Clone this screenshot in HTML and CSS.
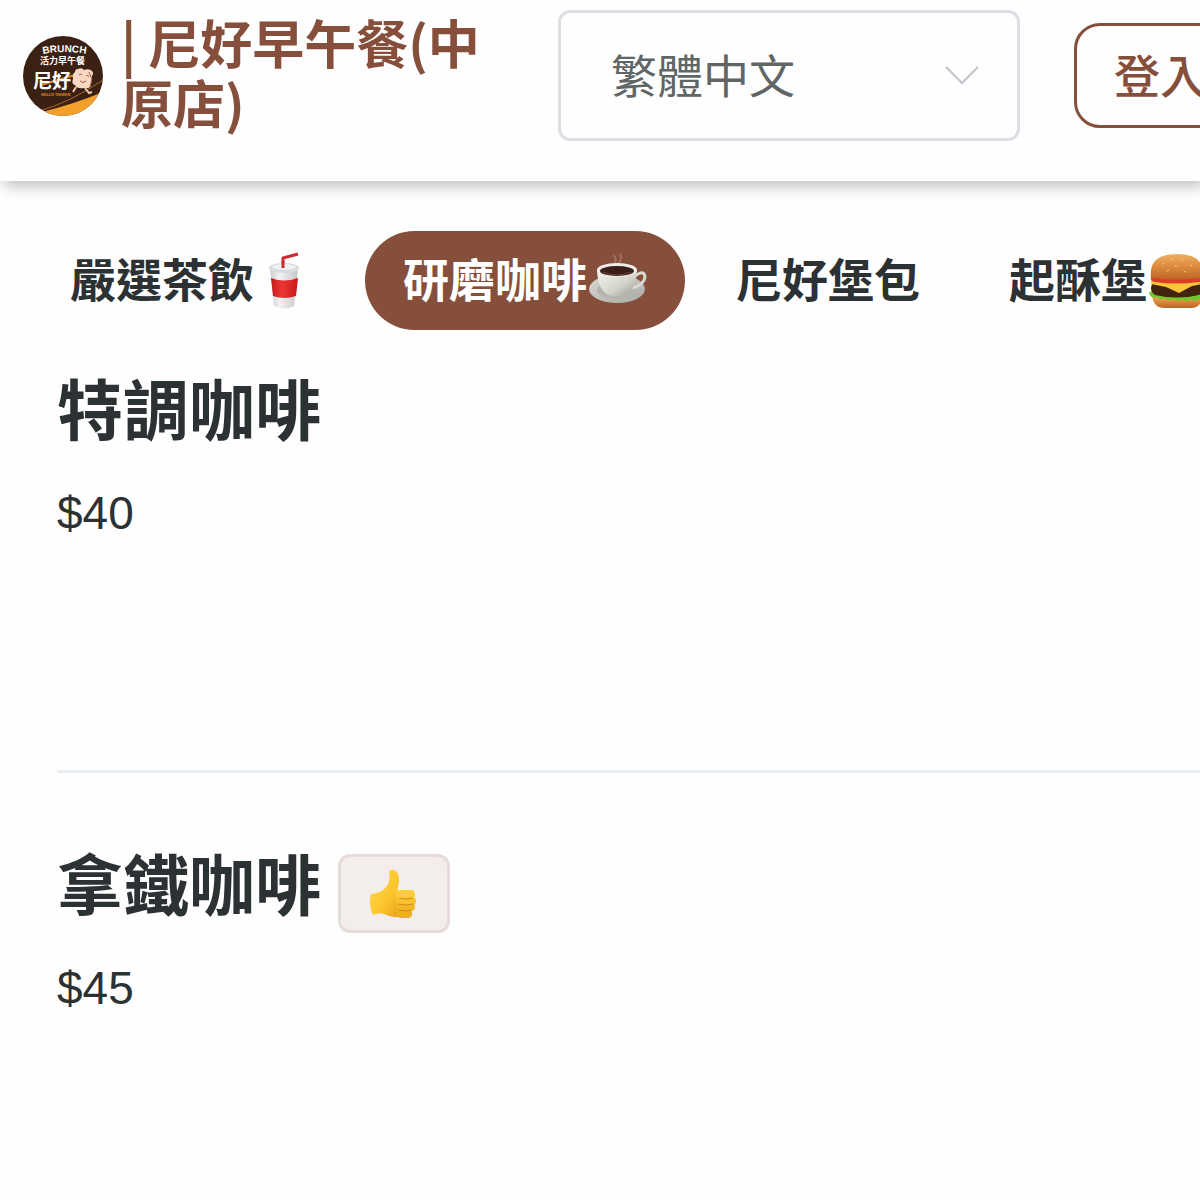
FILE: index.html
```html
<!DOCTYPE html>
<html lang="zh-Hant">
<head>
  <meta charset="UTF-8">
  <meta name="viewport" content="width=device-width, initial-scale=1.0">
  <title>尼好早午餐(中原店)</title>
  <link rel="stylesheet" href="styles.css">
</head>
<body>
  <header class="navbar">
    <svg class="logo" viewBox="0 0 80 80" role="img" aria-label="尼好早午餐">
      <defs>
        <clipPath id="logoClip"><circle cx="40" cy="40" r="40"/></clipPath>
        <path id="logoArc" d="M20 18Q40 14 64 18"/>
      </defs>
      <g clip-path="url(#logoClip)">
        <rect width="80" height="80" fill="#3a2113"/>
        <path d="M19 76Q51 68 80 56V80H19z" fill="#f3a02b"/>
        <path d="M16 75Q46 67 80 44" fill="none" stroke="#a8682c" stroke-width="1"/>
        <path d="M18 49L52 39" stroke="#e08a24" stroke-width="2"/>
        <text class="logo-arc"><textPath href="#logoArc">BRUNCH</textPath></text>
        <text class="logo-small" x="17" y="28">活力早午餐</text>
        <text class="logo-big" x="10" y="52">尼好</text>
        <text class="logo-tag" x="18" y="60">HELLO TAIWAN</text>
        <path d="M55 33q4-2 6 1q5-2 8 1q2 2 0 5l-1 9q-1 4-7 3q-7 1-9-3q-4-1-2-6q-1-5 2-7q0-3 3-3z" fill="#f7d9c3"/>
        <path d="M56 39q2-2 3 0M63 40q2-2 3 1M57 45q3 3 6 0M66 36l3 7-2 8" fill="none" stroke="#a95544" stroke-width="1"/>
        <path d="M53 51l-3 5M62 52l4 5 3-1" fill="none" stroke="#f0c9b0" stroke-width="2"/>
      </g>
    </svg>
    <h1 class="store-name">| 尼好早午餐(中原店)</h1>
    <div class="language">
      <select class="language-select" aria-label="語言">
        <option>繁體中文</option>
        <option>English</option>
      </select>
      <svg class="chevron" viewBox="0 0 34 20" aria-hidden="true">
        <path d="M1 1L17 17L33 1" fill="none" stroke="#c0c4cc" stroke-width="2"/>
      </svg>
    </div>
    <button class="login" type="button">登入</button>
  </header>

  <nav class="tabs">
    <a class="tab" href="#tea">嚴選茶飲<svg class="emoji" viewBox="0 0 60 60" aria-hidden="true">
        <defs>
          <linearGradient id="cupWhite"><stop offset="0" stop-color="#c9cbcd"/><stop offset=".35" stop-color="#f2f3f4"/><stop offset="1" stop-color="#c3c5c8"/></linearGradient>
          <linearGradient id="cupRed"><stop offset="0" stop-color="#c3191c"/><stop offset=".4" stop-color="#ee3534"/><stop offset="1" stop-color="#c8181c"/></linearGradient>
        </defs>
        <path d="M29 19V7L44 3" fill="none" stroke="#cf2a30" stroke-width="3" stroke-linejoin="round"/>
        <path d="M16 17L20 55Q31 60 40 55L44 17z" fill="url(#cupWhite)"/>
        <ellipse cx="30" cy="17" rx="15" ry="5" fill="#d9dcde"/>
        <ellipse cx="30" cy="16" rx="12" ry="3" fill="#eef0f1"/>
        <path d="M29 17V10" stroke="#cf2a30" stroke-width="3"/>
        <path d="M17 27Q30 32 44 27L42 45Q30 49 19 45z" fill="url(#cupRed)"/>
      </svg></a>
    <a class="tab active" href="#coffee" aria-current="page">研磨咖啡<svg class="emoji" viewBox="0 0 60 60" aria-hidden="true">
        <defs>
          <linearGradient id="mug" x2="1" y2="1"><stop offset="0" stop-color="#f5f4ef"/><stop offset=".6" stop-color="#d3d2cb"/><stop offset="1" stop-color="#95948d"/></linearGradient>
          <linearGradient id="saucer" x2="1" y2="1"><stop offset="0" stop-color="#dad9d4"/><stop offset="1" stop-color="#aaa9a3"/></linearGradient>
        </defs>
        <path d="M27 13Q31 8 26 4M31 13Q36 8 33 3" fill="none" stroke="#b18878" stroke-width="2" opacity=".6"/>
        <ellipse cx="30" cy="38" rx="28" ry="14" fill="url(#saucer)"/>
        <ellipse cx="30" cy="39" rx="20" ry="9" fill="#b5b4ae"/>
        <path d="M48 25Q57 18 58 26Q57 34 45 37" fill="none" stroke="#d9d8d1" stroke-width="3"/>
        <path d="M10 19Q11 40 22 44Q30 47 37 44Q49 40 50 19z" fill="url(#mug)"/>
        <ellipse cx="30" cy="19" rx="20" ry="7" fill="#eeede7"/>
        <ellipse cx="30" cy="20" rx="17" ry="5" fill="#382019"/>
        <path d="M16 21Q29 27 44 21" fill="none" stroke="#6c4737" stroke-width="1"/>
      </svg></a>
    <a class="tab" href="#burger">尼好堡包</a>
    <a class="tab" href="#pastry">起酥堡<svg class="emoji" viewBox="0 0 60 60" aria-hidden="true">
        <defs>
          <linearGradient id="bun" x2="0" y2="1"><stop offset="0" stop-color="#efb062"/><stop offset=".5" stop-color="#dc8a3c"/><stop offset="1" stop-color="#bc6425"/></linearGradient>
        </defs>
        <path d="M5 44Q6 57 18 57H44Q55 57 55 44z" fill="url(#bun)"/>
        <path d="M2 42q3-4 7 0q4-3 8 2q4-2 8 1q4-4 8 1q4-3 8 0q4-4 8-1q5-6 9-2q0 7-6 5q-4 4-8 0q-5 4-9 0q-4 4-8 0q-5 3-9-1q-4 3-8-1q-6 2-8-4z" fill="#6fc829"/>
        <path d="M5 33H55Q59 40 52 44Q30 49 8 44Q2 40 5 33z" fill="#42230f"/>
        <path d="M4 29H56V33L45 35L32 42L19 36L4 33z" fill="#fbc43a"/>
        <path d="M4 26H56Q57 31 51 31Q30 34 8 31Q3 30 4 26z" fill="#dd3b26"/>
        <path d="M4 27Q1 3 30 3Q59 3 56 27Q30 30 4 27z" fill="url(#bun)"/>
        <path d="M15 13l2-1M24 8l2 0M34 8l2 1M43 14l2 1M28 15l2 0M20 20l2-1M37 20l2 1" stroke="#f3c283" stroke-width="1" stroke-linecap="round"/>
      </svg></a>
  </nav>

  <main class="menu">
    <section class="item">
      <h2 class="item-name">特調咖啡</h2>
      <p class="price">$40</p>
    </section>
    <section class="item">
      <h2 class="item-name">拿鐵咖啡
        <span class="badge">
          <svg viewBox="0 0 50 50" role="img" aria-label="推薦">
            <defs>
              <linearGradient id="thumb" x2="1" y2="1"><stop offset="0" stop-color="#ffd94a"/><stop offset=".6" stop-color="#fcc42d"/><stop offset="1" stop-color="#e39b18"/></linearGradient>
            </defs>
            <path d="M2 25Q13 24 18 17Q22 11 20 4Q20 0 25 1Q31 4 30 13L28 23L34 30V47Q24 50 15 45Q10 43 4 46Q-1 36 2 25z" fill="url(#thumb)"/>
            <rect x="28" y="40" width="15" height="9" rx="4" fill="#edaf25"/>
            <rect x="28" y="34" width="18" height="8" rx="4" fill="#f3b829"/>
            <rect x="27" y="28" width="20" height="8" rx="4" fill="#f9c22e"/>
            <rect x="27" y="21" width="19" height="9" rx="4" fill="#ffcd3a"/>
            <path d="M30 29Q38 31 44 29M29 35Q38 37 44 35M30 41Q37 43 42 41" fill="none" stroke="#cd8a16" stroke-width="1"/>
          </svg>
        </span>
      </h2>
      <p class="price">$45</p>
    </section>
  </main>
</body>
</html>
```
FILE: styles.css
```css
* {
  box-sizing: border-box;
}
body {
  font-family: "Liberation Sans", "Noto Sans CJK TC", sans-serif;
  margin: 0;
  color: #2c3133;
  background-color: #fefefe;
  overflow-x: hidden;
}
.navbar {
  display: flex;
  align-items: center;
  padding: 10px 0 40px 23px;
  background-color: #fefefe;
  box-shadow: 4px 5px 14px rgba(0, 0, 0, 0.26);
}
.logo {
  flex: none;
  width: 80px;
  height: 80px;
  margin-right: 18px;
}
.logo text {
  fill: white;
  font-family: "Noto Sans CJK TC", sans-serif;
  font-weight: bold;
}
.logo .logo-arc {
  font-family: "Liberation Sans", sans-serif;
  font-size: 10px;
}
.logo .logo-small {
  font-size: 9px;
}
.logo .logo-big {
  font-size: 19px;
}
.logo .logo-tag {
  fill: #e08a24;
  font-size: 4px;
}
.store-name {
  flex: none;
  width: 380px;
  margin: 0 57px 0 0;
  padding-bottom: 8px;
  font-family: "Noto Sans CJK TC", sans-serif;
  font-size: 52px;
  font-weight: bold;
  line-height: 60px;
  color: #864f3b;
  word-break: break-all;
}
.language {
  position: relative;
  flex: none;
  width: 462px;
  margin-right: 54px;
}
.language-select {
  appearance: none;
  display: block;
  width: 100%;
  height: 131px;
  padding: 0 50px 6px;
  border: 3px solid #dcdfe3;
  border-radius: 12px;
  background: none;
  color: #606566;
  font-family: "Noto Sans CJK TC", sans-serif;
  font-size: 46px;
}
.chevron {
  position: absolute;
  top: 56px;
  right: 41px;
  width: 34px;
  height: 20px;
  pointer-events: none;
}
.login {
  flex: none;
  height: 105px;
  padding: 0 37px 6px;
  border: 3px solid #864f3b;
  border-radius: 26px;
  background: none;
  color: #864f3b;
  font-family: "Noto Sans CJK TC", sans-serif;
  font-size: 46px;
  font-weight: 500;
}
.tabs {
  display: flex;
  gap: 13px;
  padding: 50px 0 0 32px;
}
.tab {
  display: flex;
  flex: none;
  align-items: center;
  height: 99px;
  padding: 0 38px;
  border-radius: 50px;
  color: #2c3133;
  font-size: 46px;
  font-weight: bold;
  line-height: 60px;
  text-decoration: none;
}
.tab.active {
  background-color: #864f3b;
  color: white;
}
.emoji {
  width: 60px;
  height: 60px;
}
.menu {
  padding-left: 57px;
}
.item {
  height: 475px;
  padding-top: 68px;
}
.item:first-child {
  height: 443px;
  padding-top: 36px;
  border-bottom: 3px solid #e9eef2;
}
.item-name {
  display: flex;
  align-items: flex-end;
  gap: 17px;
  margin: 0;
  font-size: 66px;
  font-weight: bold;
  line-height: 92px;
}
.price {
  margin: 22px 0 0;
  font-size: 46px;
  line-height: 66px;
}
.badge {
  display: flex;
  align-items: center;
  justify-content: center;
  width: 112px;
  height: 79px;
  border: 3px solid #e6dcd9;
  border-radius: 12px;
  background-color: #f3eeec;
}
.badge svg {
  width: 50px;
  height: 50px;
}
```
